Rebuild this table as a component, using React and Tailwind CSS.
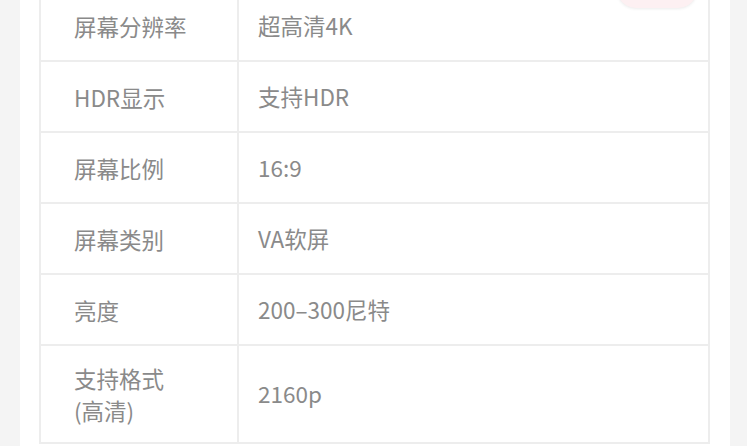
import React from "react";

const rows = [
  { k: ["屏幕分辨率"], v: "超高清4K", h: "h-[71px]" },
  { k: ["HDR显示"], v: "支持HDR", h: "h-[71px]" },
  { k: ["屏幕比例"], v: "16:9", h: "h-[71px]" },
  { k: ["屏幕类别"], v: "VA软屏", h: "h-[71px]" },
  { k: ["亮度"], v: "200–300尼特", h: "h-[71px]" },
  { k: ["支持格式", "(高清)"], v: "2160p", h: "h-[98px]" },
];

export default function App() {
  return (
    <div
      className="relative w-[750px] h-[446px] overflow-hidden bg-white flex text-[22.5px] text-[#8a8a8a]"
      style={{ fontFamily: '"Noto Sans CJK SC", "Noto Sans", sans-serif' }}
    >
      <div className="w-[20px] shrink-0 bg-[#f4f4f4]" />
      <div className="w-[19px] shrink-0 bg-white" />
      <div className="w-[671px] shrink-0 -mt-[9px] border-l-2 border-r-2 border-[#ededed] self-start">
        {rows.map((r, i) => (
          <div key={i} className={`flex ${r.h} border-b-2 border-[#ededed]`}>
            <div className="w-[198px] shrink-0 border-r-2 border-[#ededed] flex flex-col justify-center pl-[33px] leading-[32px]">
              {r.k.map((t, j) => (
                <span key={j}>{t}</span>
              ))}
            </div>
            <div className="flex-1 flex items-center pl-[19px]">{r.v}</div>
          </div>
        ))}
      </div>
      <div className="w-[20px] shrink-0 bg-white" />
      <div className="w-[17px] shrink-0 bg-[#f4f4f4]" />
      <div className="flex-1 bg-white" />
      <div className="absolute left-[617px] top-[-30px] w-[80px] h-[38px] rounded-full bg-[#fdf0f2] shadow-[0_1px_3px_rgba(0,0,0,0.08)]" />
    </div>
  );
}
